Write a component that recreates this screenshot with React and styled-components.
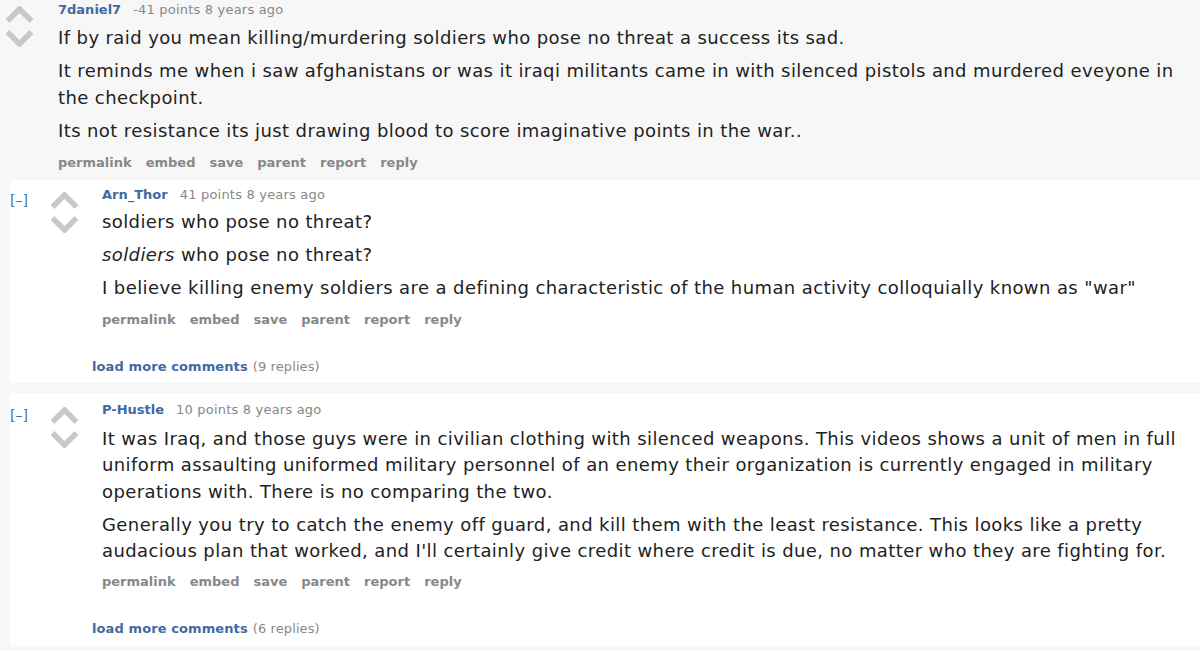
import React from "react";
import styled, { createGlobalStyle } from "styled-components";

const Global = createGlobalStyle`
  html, body { margin: 0; padding: 0; background: #f7f7f8; }
  body { font-family: "DejaVu Sans", Verdana, sans-serif; overflow: hidden; }
`;

const Page = styled.div`
  width: 1200px;
  height: 651px;
  overflow: hidden;
  background: #f7f7f8;
`;

const Comment = styled.div`
  display: flex;
  align-items: flex-start;
  padding: ${(p) => p.$pad || "0"};
`;

const Toggle = styled.a`
  width: ${(p) => p.$w}px;
  flex: none;
  font-size: 14px;
  line-height: 16px;
  color: #4a6fa5;
  margin-top: ${(p) => p.$top || 0}px;
  padding-left: 1px;
  box-sizing: border-box;
`;

const Votes = styled.div`
  flex: none;
  display: flex;
  flex-direction: column;
  gap: 7px;
  margin: ${(p) => p.$top}px ${(p) => p.$right}px 0 ${(p) => p.$left}px;
`;

const Entry = styled.div`
  flex: 1;
  min-width: 0;
  padding-right: 15px;
`;

const Tagline = styled.div`
  font-size: 13px;
  line-height: 16px;
  color: #888;
  white-space: nowrap;
  letter-spacing: 0.2px;
`;

const Author = styled.a`
  color: #3f6aa3;
  font-weight: bold;
  letter-spacing: 0;
  margin-right: 12px;
`;

const Body = styled.div`
  margin-top: ${(p) => p.$top}px;
  color: #222;
  font-size: 18px;
  letter-spacing: 0.4px;
  line-height: 26.4px;
`;

const Para = styled.p`
  margin: 0 0 7px 0;
  &:last-child { margin-bottom: 0; }
`;

const Actions = styled.ul`
  list-style: none;
  margin: ${(p) => p.$top}px 0 0 0;
  padding: 0;
  display: flex;
  gap: 14px;
  font-size: 13px;
  line-height: 16px;
  font-weight: bold;
  color: #888;
`;

const Card = styled.div`
  margin: ${(p) => p.$margin};
  background: #fff;
  border-radius: 5px 0 0 5px;
`;

const LoadMore = styled.div`
  margin: ${(p) => p.$top}px 0 0 ${(p) => p.$left}px;
  font-size: 13px;
  line-height: 16px;
  color: #888;
  letter-spacing: 0.1px;
`;

const LoadLink = styled.a`
  color: #3f6aa3;
  font-weight: bold;
  margin-right: 5px;
`;

const Arrow = ({ down }) => (
  <svg width="29" height="17" viewBox="0 0 29 17" style={{ display: "block" }}>
    <polyline
      points={down ? "2.5,2 14.5,14 26.5,2" : "2.5,15 14.5,3 26.5,15"}
      fill="none"
      stroke="#c8c8c8"
      strokeWidth="5.5"
      strokeLinejoin="miter"
    />
  </svg>
);

const ActionList = ({ top }) => (
  <Actions $top={top}>
    {["permalink", "embed", "save", "parent", "report", "reply"].map((a) => (
      <li key={a}>{a}</li>
    ))}
  </Actions>
);

export default function App() {
  return (
    <Page>
      <Global />
      <Comment $pad="2px 0 9px 5px">
        <Votes $top={4} $left={0} $right={24}>
          <Arrow />
          <Arrow down />
        </Votes>
        <Entry>
          <Tagline>
            <Author>7daniel7</Author>-41 points 8 years ago
          </Tagline>
          <Body $top={7}>
            <Para>If by raid you mean killing/murdering soldiers who pose no threat a success its sad.</Para>
            <Para>It reminds me when i saw afghanistans or was it iraqi militants came in with silenced pistols and murdered eveyone in the checkpoint.</Para>
            <Para>Its not resistance its just drawing blood to score imaginative points in the war..</Para>
          </Body>
          <ActionList top={10} />
        </Entry>
      </Comment>

      <Card $margin="0 0 10px 9px">
        <Comment $pad="7px 0 8px 0">
          <Toggle $w={27} $top={5}>[–]</Toggle>
          <Votes $top={5} $left={14} $right={23}>
            <Arrow />
            <Arrow down />
          </Votes>
          <Entry>
            <Tagline>
              <Author>Arn_Thor</Author>41 points 8 years ago
            </Tagline>
            <Body $top={6}>
              <Para>soldiers who pose no threat?</Para>
              <Para>
                <em>soldiers</em> who pose no threat?
              </Para>
              <Para>I believe killing enemy soldiers are a defining characteristic of the human activity colloquially known as "war"</Para>
            </Body>
            <ActionList top={10} />
            <LoadMore $top={31} $left={-10}>
              <LoadLink>load more comments</LoadLink>(9 replies)
            </LoadMore>
          </Entry>
        </Comment>
      </Card>

      <Card $margin="0 0 0 9px">
        <Comment $pad="9px 0 9px 0">
          <Toggle $w={27} $top={5}>[–]</Toggle>
          <Votes $top={5} $left={14} $right={23}>
            <Arrow />
            <Arrow down />
          </Votes>
          <Entry>
            <Tagline>
              <Author>P-Hustle</Author>10 points 8 years ago
            </Tagline>
            <Body $top={8}>
              <Para>It was Iraq, and those guys were in civilian clothing with silenced weapons. This videos shows a unit of men in full uniform assaulting uniformed military personnel of an enemy their organization is currently engaged in military operations with. There is no comparing the two.</Para>
              <Para>Generally you try to catch the enemy off guard, and kill them with the least resistance. This looks like a pretty audacious plan that worked, and I'll certainly give credit where credit is due, no matter who they are fighting for.</Para>
            </Body>
            <ActionList top={9} />
            <LoadMore $top={31} $left={-10}>
              <LoadLink>load more comments</LoadLink>(6 replies)
            </LoadMore>
          </Entry>
        </Comment>
      </Card>
    </Page>
  );
}
